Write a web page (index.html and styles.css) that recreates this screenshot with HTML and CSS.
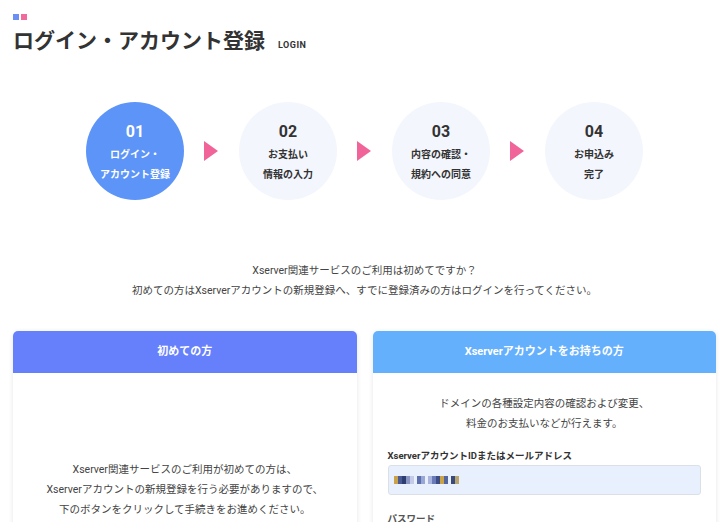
FILE: index.html
```html
<!DOCTYPE html>
<html lang="ja">
<head>
  <meta charset="UTF-8">
  <meta name="viewport" content="width=device-width, initial-scale=1.0">
  <title>ログイン・アカウント登録</title>
  <link rel="stylesheet" href="styles.css">
</head>
<body>
  <div class="page">
    <!-- Page title -->
    <div class="page-head">
      <div class="dots"><span class="dot dot-blue"></span><span class="dot dot-pink"></span></div>
      <h1>ログイン・アカウント登録<span class="sub">LOGIN</span></h1>
    </div>

    <!-- Steps -->
    <div class="steps">
      <div class="step step-active">
        <span class="step-num">01</span>
        <span class="step-label">ログイン・<br>アカウント登録</span>
      </div>
      <span class="arrow"></span>
      <div class="step">
        <span class="step-num">02</span>
        <span class="step-label">お支払い<br>情報の入力</span>
      </div>
      <span class="arrow"></span>
      <div class="step">
        <span class="step-num">03</span>
        <span class="step-label">内容の確認・<br>規約への同意</span>
      </div>
      <span class="arrow"></span>
      <div class="step">
        <span class="step-num">04</span>
        <span class="step-label">お申込み<br>完了</span>
      </div>
    </div>

    <p class="intro">Xserver関連サービスのご利用は初めてですか？<br>初めての方はXserverアカウントの新規登録へ、すでに登録済みの方はログインを行ってください。</p>

    <!-- Cards -->
    <div class="cards">
      <div class="card">
        <div class="card-head card-head-new">初めての方</div>
        <div class="card-body">
          <div class="card-visual"></div>
          <p class="card-text">Xserver関連サービスのご利用が初めての方は、<br>Xserverアカウントの新規登録を行う必要がありますので、<br>下のボタンをクリックして手続きをお進めください。</p>
        </div>
      </div>
      <div class="card">
        <div class="card-head card-head-member">Xserverアカウントをお持ちの方</div>
        <div class="card-body">
          <p class="card-text">ドメインの各種設定内容の確認および変更、<br>料金のお支払いなどが行えます。</p>
          <label class="field-label" for="account-id">XserverアカウントIDまたはメールアドレス</label>
          <div class="field" id="account-id">
            <span class="mosaic">
              <i style="background:#c9a24a"></i><i style="background:#4a5a94"></i><i style="background:#2f3c6e"></i><i style="background:#8a96c4"></i><i style="background:#c3cbe9"></i><i class="gap"></i><i style="background:#5b6fb0"></i><i style="background:#9aa6d4"></i><i class="gap"></i><i style="background:#aab5df"></i><i style="background:#6b7bb8"></i><i style="background:#3e4d86"></i><i style="background:#c9a24a"></i><i style="background:#55669f"></i><i class="gap"></i><i style="background:#3a4a7a"></i><i style="background:#b9a56e"></i>
            </span>
          </div>
          <label class="field-label field-label-pw">パスワード</label>
        </div>
      </div>
    </div>
  </div>
</body>
</html>
```

FILE: styles.css
```css
body {
  margin: 0;
  padding: 0;
  font-family: 'Roboto', 'Noto Sans CJK JP', sans-serif;
  color: #333;
  background-color: #fff;
}

.page {
  padding: 14px 9px 0 13px;
}

/* Title */
.page-head .dots {
  display: flex;
  gap: 2px;
  height: 6px;
}

.dot {
  width: 6px;
  height: 6px;
}

.dot-blue {
  background-color: #6b8ff4;
}

.dot-pink {
  background-color: #f06b9b;
}

.page-head h1 {
  margin: 6px 0 0;
  font-size: 21px;
  line-height: 30px;
  font-weight: 700;
  color: #333;
}

.page-head .sub {
  margin-left: 13px;
  font-size: 9px;
  font-weight: 700;
  letter-spacing: 0.5px;
}

/* Steps */
.steps {
  display: flex;
  justify-content: center;
  align-items: center;
  margin-top: 42px;
}

.step {
  width: 98px;
  height: 98px;
  box-sizing: border-box;
  padding-top: 20px;
  border-radius: 50%;
  background-color: #f3f6fd;
  display: flex;
  flex-direction: column;
  align-items: center;
  color: #333;
}

.step-active {
  background-color: #5c94f7;
  color: #fff;
}

.step-num {
  font-size: 16px;
  font-weight: 700;
  line-height: 20px;
}

.step-label {
  margin-top: 3px;
  font-size: 10px;
  font-weight: 700;
  line-height: 20px;
  text-align: center;
}

.arrow {
  width: 0;
  height: 0;
  margin: 0 21px 0 20px;
  border-top: 10px solid transparent;
  border-bottom: 10px solid transparent;
  border-left: 14px solid #f0649a;
}

/* Intro */
.intro {
  margin: 61px 0 0;
  text-align: center;
  font-size: 10.5px;
  line-height: 20px;
  color: #444;
}

/* Cards */
.cards {
  display: grid;
  grid-template-columns: 1fr 1fr;
  gap: 16px;
  margin-top: 30px;
}

.card {
  background-color: #fff;
  border-radius: 5px;
  box-shadow: 0 1px 5px rgba(0, 0, 0, 0.1);
  overflow: hidden;
  height: 220px;
}

.card-head {
  height: 42px;
  line-height: 42px;
  text-align: center;
  color: #fff;
  font-size: 11px;
  font-weight: 700;
}

.card-head-new {
  background-color: #6680fc;
}

.card-head-member {
  background-color: #65b0fd;
}

.card-body {
  padding: 21px 15px 0;
}

.card-visual {
  height: 66px;
}

.card-text {
  margin: 0;
  text-align: center;
  font-size: 10.5px;
  line-height: 20px;
  color: #444;
}

.field-label {
  display: block;
  margin-top: 15px;
  font-size: 9.5px;
  font-weight: 700;
  line-height: 14px;
  color: #333;
}

.field {
  margin-top: 2px;
  height: 30px;
  box-sizing: border-box;
  border: 1px solid #dbe0e8;
  border-radius: 3px;
  background-color: #e8f0fe;
  display: flex;
  align-items: center;
  padding-left: 5px;
}

.mosaic {
  display: flex;
}

.mosaic i {
  display: block;
  width: 4px;
  height: 8px;
}

.mosaic i.gap {
  width: 3px;
}

.field-label-pw {
  margin-top: 17px;
  color: #555;
}
```
